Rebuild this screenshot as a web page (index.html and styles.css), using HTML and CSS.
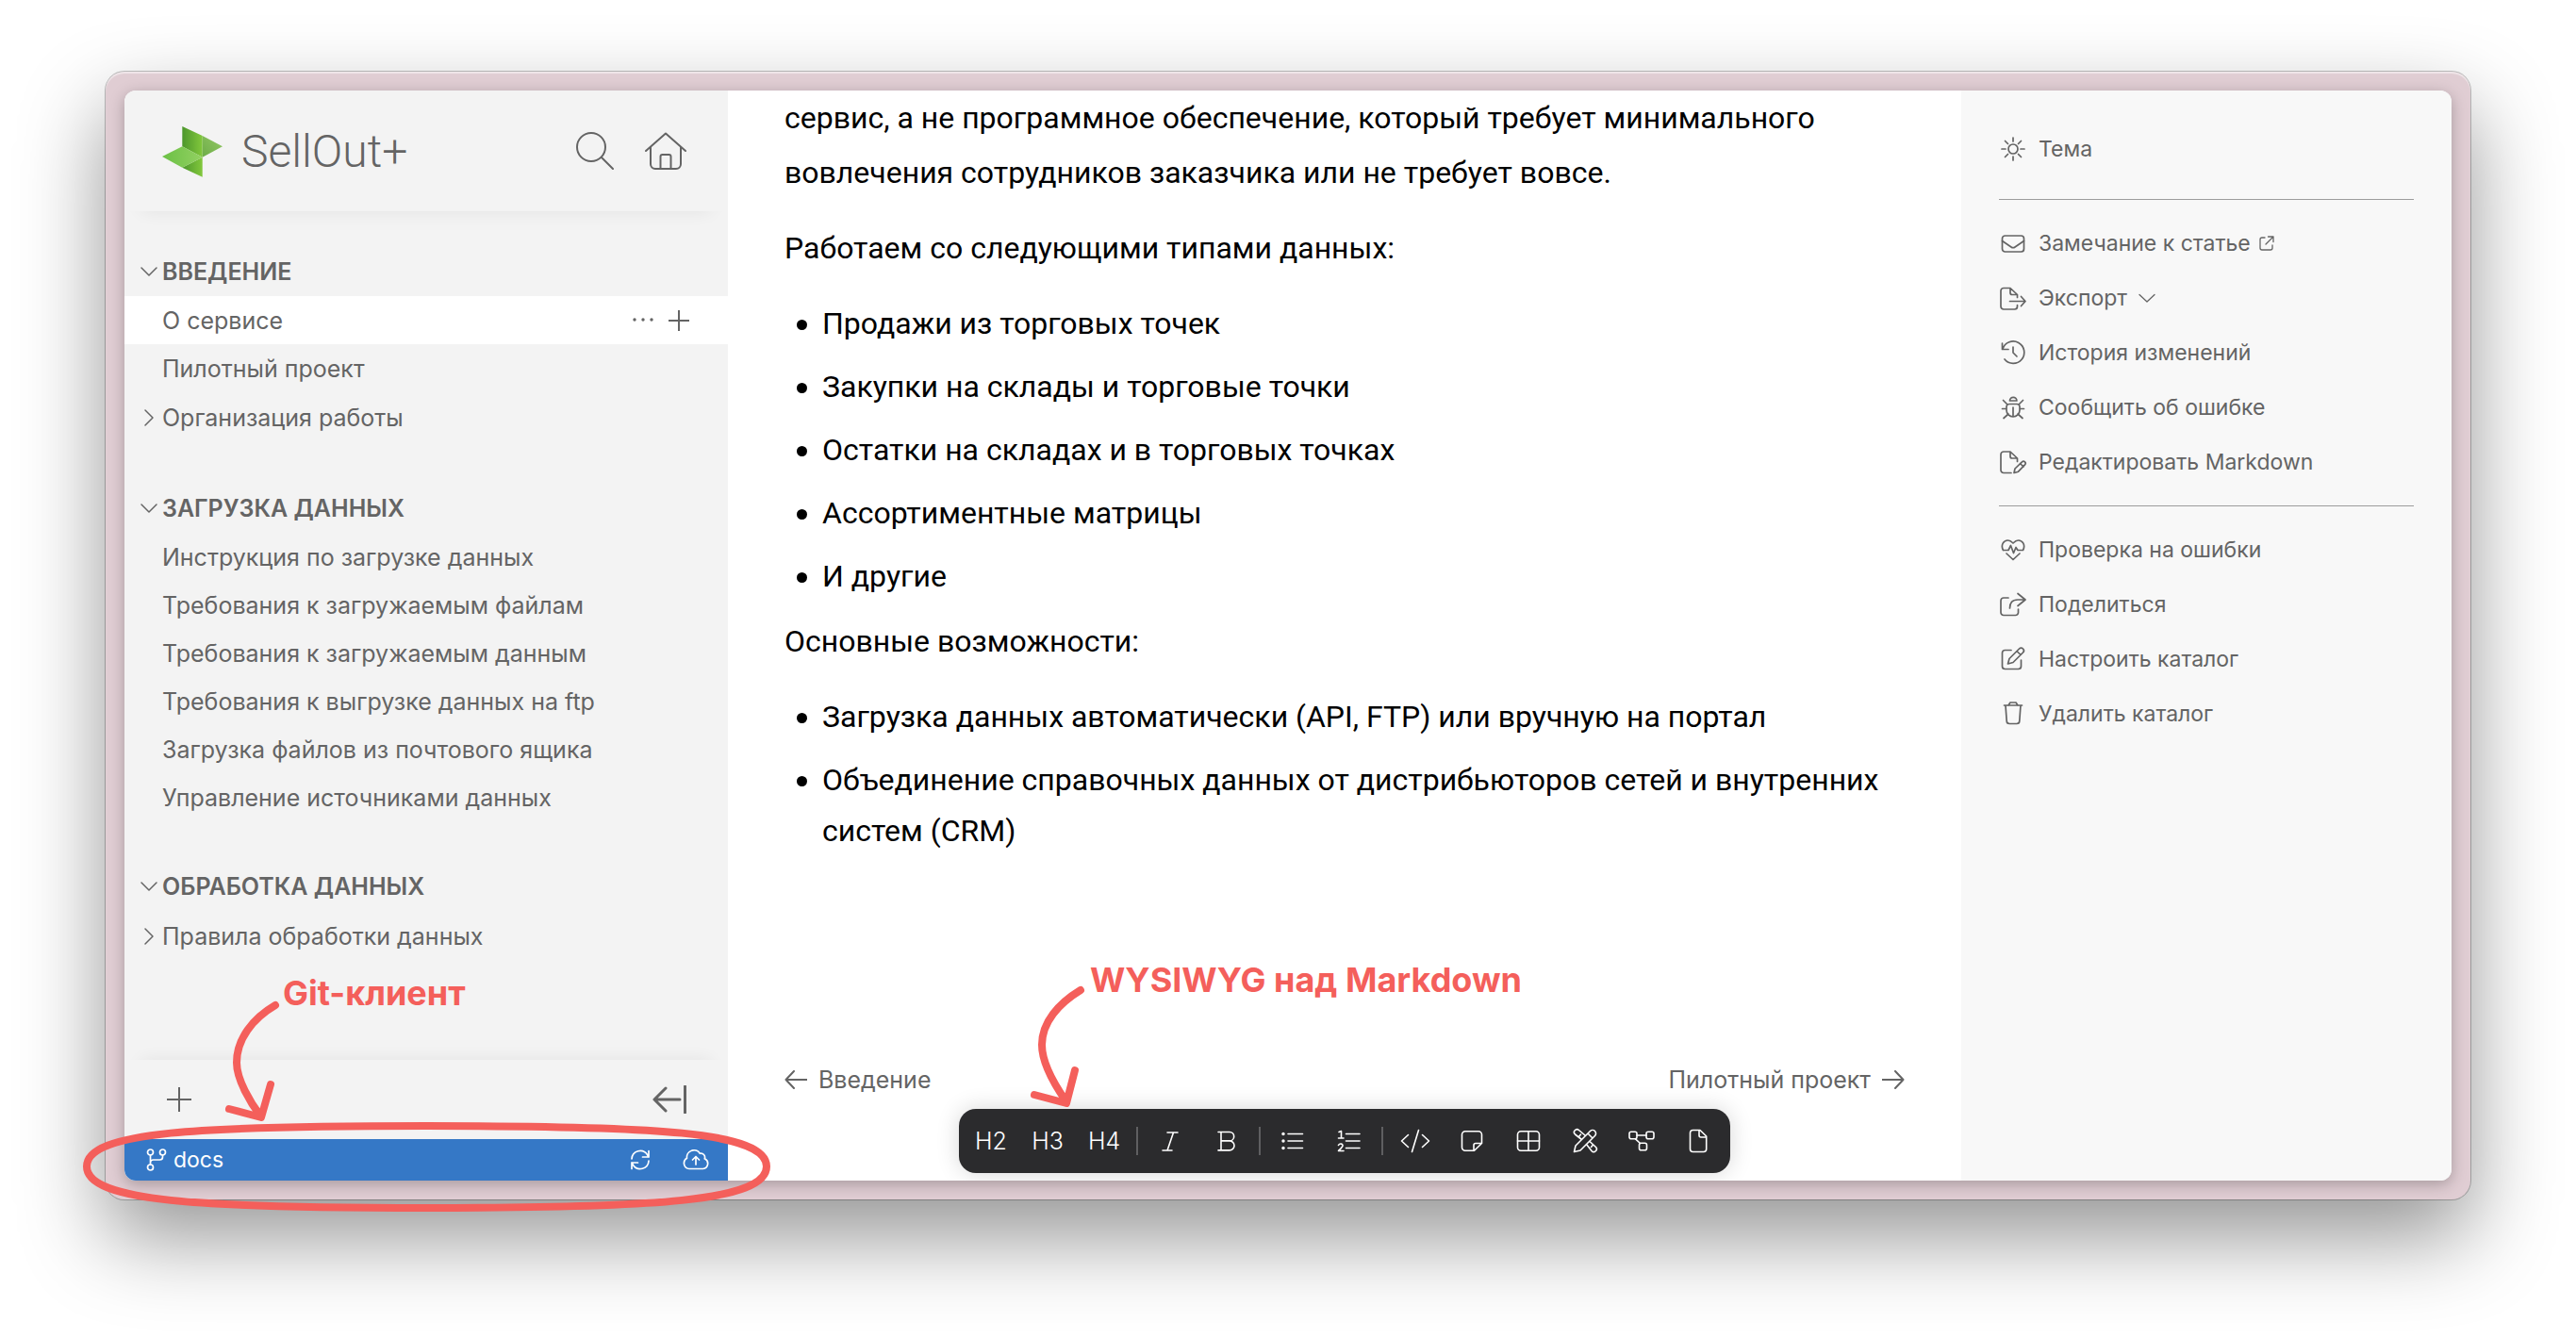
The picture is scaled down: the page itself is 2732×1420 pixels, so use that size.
FILE: index.html
```html
<!DOCTYPE html>
<html lang="ru">
<head>
<meta charset="utf-8">
<meta name="viewport" content="width=device-width, initial-scale=1">
<title>SellOut+ — О сервисе</title>
<link rel="stylesheet" href="styles.css">
</head>
<body>
<div class="frame">
  <div class="app">

    <aside class="sidebar">
      <header class="sidebar-header">
        <a class="brand" href="#">
          <svg class="brand-logo" viewBox="0 0 64 56" aria-hidden="true">
            <defs>
              <linearGradient id="g1" x1="0" y1="0" x2="1" y2="0"><stop offset="0" stop-color="#4c962c"/><stop offset="1" stop-color="#82c83c"/></linearGradient>
              <linearGradient id="g2" x1="0" y1="1" x2="1" y2="0"><stop offset="0" stop-color="#6dac48"/><stop offset="1" stop-color="#93c864"/></linearGradient>
              <linearGradient id="g3" x1="0" y1="0" x2="1" y2="0"><stop offset="0" stop-color="#6bc045"/><stop offset="1" stop-color="#93d162"/></linearGradient>
            </defs>
            <path d="M21.3 1 42.7 11V33.7L21.3 22.3z" fill="url(#g1)"/>
            <path d="M42.7 11 64 22.3 42.7 33.7z" fill="url(#g2)"/>
            <path d="M42.7 33.7V54.7L21.3 44.7z" fill="url(#g1)"/>
            <path d="M0 33 21.3 22.3 42.7 33.7 21.3 44.7z" fill="url(#g3)"/>
          </svg>
          <span>SellOut+</span>
        </a>
        <div class="header-actions">
          <button class="icon-btn" aria-label="Поиск">
            <svg width="40" height="40" viewBox="0 0 40 40"><circle cx="16" cy="16" r="15"/><path d="M27 27 39 39"/></svg>
          </button>
          <button class="icon-btn" aria-label="На главную">
            <svg width="44" height="40" viewBox="0 0 44 40"><path d="M1 20 22 1.5 43 20M6 16V34a5 5 0 0 0 5 5H33a5 5 0 0 0 5-5V16M16.500 39V26a2 2 0 0 1 2-2h7a2 2 0 0 1 2 2V39"/></svg>
          </button>
        </div>
      </header>

      <nav class="nav">
        <section class="nav-group">
          <h2 class="nav-row nav-heading"><svg class="chev" viewBox="0 0 20 20"><path d="M2 6 10 14 18 6"/></svg><a href="#">ВВЕДЕНИЕ</a></h2>
          <div class="nav-row is-active">
            <a href="#">О сервисе</a>
            <div class="row-actions">
              <button class="icon-btn" aria-label="Ещё"><svg class="solid" width="22" height="22" viewBox="0 0 22 22"><circle cx="2" cy="10" r="1.700"/><circle cx="11" cy="10" r="1.700"/><circle cx="20" cy="10" r="1.700"/></svg></button>
              <button class="icon-btn" aria-label="Добавить"><svg width="22" height="22" viewBox="0 0 22 22"><path d="M11 0V22M0 11H22"/></svg></button>
            </div>
          </div>
          <div class="nav-row"><a href="#">Пилотный проект</a></div>
          <div class="nav-row nav-parent"><svg class="chev" viewBox="0 0 20 20"><path d="M6 2 14 10 6 18"/></svg><a href="#">Организация работы</a></div>
        </section>
        <section class="nav-group">
          <h2 class="nav-row nav-heading"><svg class="chev" viewBox="0 0 20 20"><path d="M2 6 10 14 18 6"/></svg><a href="#">ЗАГРУЗКА ДАННЫХ</a></h2>
          <div class="nav-row"><a href="#">Инструкция по загрузке данных</a></div>
          <div class="nav-row"><a href="#">Требования к загружаемым файлам</a></div>
          <div class="nav-row"><a href="#">Требования к загружаемым данным</a></div>
          <div class="nav-row"><a href="#">Требования к выгрузке данных на ftp</a></div>
          <div class="nav-row"><a href="#">Загрузка файлов из почтового ящика</a></div>
          <div class="nav-row"><a href="#">Управление источниками данных</a></div>
        </section>
        <section class="nav-group">
          <h2 class="nav-row nav-heading"><svg class="chev" viewBox="0 0 20 20"><path d="M2 6 10 14 18 6"/></svg><a href="#">ОБРАБОТКА ДАННЫХ</a></h2>
          <div class="nav-row nav-parent"><svg class="chev" viewBox="0 0 20 20"><path d="M6 2 14 10 6 18"/></svg><a href="#">Правила обработки данных</a></div>
        </section>
      </nav>

      <footer class="sidebar-footer">
        <button class="icon-btn" aria-label="Новая статья"><svg width="26" height="26" viewBox="0 0 26 26"><path d="M13 0V26M0 13H26"/></svg></button>
        <button class="icon-btn" aria-label="Свернуть панель"><svg class="bold" width="36" height="30" viewBox="0 0 36 30"><path d="M29 15H2M14 3 2 15 14 27M34.500 1V29"/></svg></button>
      </footer>
      <div class="git-bar">
        <button class="git-branch">
          <svg width="22" height="24" viewBox="0 0 22 24"><circle cx="4.500" cy="4" r="3"/><circle cx="17.500" cy="4" r="3"/><circle cx="4.500" cy="20" r="3"/><path d="M4.500 7V17M17.500 7v2a3 3 0 0 1-3 3h-7a3 3 0 0 0-3 3"/></svg>
          <span>docs</span>
        </button>
        <button class="icon-btn" aria-label="Синхронизировать"><svg width="22" height="22" viewBox="0 0 22 22"><path d="M2 10a9 9 0 0 1 16.500-4.500L20 8M20 1.500V8H13.500M20 12a9 9 0 0 1-16.500 4.500L2 14M2 20.500V14H8.500"/></svg></button>
        <button class="icon-btn" aria-label="Опубликовать"><svg width="28" height="22" viewBox="0 0 28 22"><path d="M7 20.500a6 6 0 0 1-2.500-11.200 7.500 7.500 0 0 1 13.800-5 4.200 4.200 0 0 1 5 5.500A5.600 5.600 0 0 1 21.500 20.500zM14 16V8M10.500 11 14 7.500 17.500 11"/></svg></button>
      </div>
    </aside>

    <main class="main">
      <article class="article">
        <p>сервис, а не программное обеспечение, который требует минимального вовлечения сотрудников заказчика или не требует вовсе.</p>
        <p>Работаем со следующими типами данных:</p>
        <ul>
          <li><span>Продажи из торговых точек</span></li>
          <li><span>Закупки на склады и торговые точки</span></li>
          <li><span>Остатки на складах и в торговых точках</span></li>
          <li><span>Ассортиментные матрицы</span></li>
          <li><span>И другие</span></li>
        </ul>
        <p>Основные возможности:</p>
        <ul>
          <li><span>Загрузка данных автоматически (API, FTP) или вручную на портал</span></li>
          <li><span>Объединение справочных данных от дистрибьюторов сетей и внутренних систем (CRM)</span></li>
        </ul>
      </article>

      <nav class="pager">
        <a href="#"><svg width="24" height="20" viewBox="0 0 24 20"><path d="M24 10H1.500M10 1 1.500 10 10 19"/></svg>Введение</a>
        <a href="#">Пилотный проект<svg width="24" height="20" viewBox="0 0 24 20"><path d="M0 10H22.500M14 1 22.500 10 14 19"/></svg></a>
      </nav>

      <div class="toolbar" role="toolbar" aria-label="Форматирование">
        <button>H2</button>
        <button>H3</button>
        <button>H4</button>
        <span class="sep"></span>
        <button aria-label="Курсив"><svg viewBox="0 0 28 28"><path d="M11 5H22M6 24H16M17.500 5 11 24"/></svg></button>
        <button aria-label="Полужирный"><svg viewBox="0 0 28 28"><path d="M5 4.500H17a4.700 4.700 0 0 1 0 9.400H8M17 13.900a5 5 0 0 1 0 10H5M8 4.500V24"/></svg></button>
        <span class="sep"></span>
        <button aria-label="Список"><svg viewBox="0 0 28 28"><path d="M9 6.500H24.500M9 14H24.500M9 21.500H24.500"/><g class="dots"><circle cx="4" cy="6.500" r="1.700"/><circle cx="4" cy="14" r="1.700"/><circle cx="4" cy="21.500" r="1.700"/></g></svg></button>
        <button aria-label="Нумерованный список"><svg viewBox="0 0 28 28"><path d="M10.500 6.500H25M10.500 14H25M10.500 21.500H25M3 4.500 5.500 3.500V11M2.500 11H8M2.500 18.500C3.500 16.500 7.500 16.500 7 19.200 6.800 20.500 4.500 22.500 2.500 24.500H8"/></svg></button>
        <span class="sep"></span>
        <button aria-label="Код"><svg class="wide" viewBox="0 0 32 28"><path d="M8.500 7.500 1.500 14 8.500 20.500M23.500 7.500 30.500 14 23.500 20.500M19.500 2.500 12.500 25.500"/></svg></button>
        <button aria-label="Заметка"><svg viewBox="0 0 28 28"><path d="M7 3.700H21a3.500 3.500 0 0 1 3.500 3.500V16.500L16.500 24.300H7a3.500 3.500 0 0 1-3.500-3.500V7.200A3.500 3.500 0 0 1 7 3.700zM16 24V18.500a2 2 0 0 1 2-2H24.500"/></svg></button>
        <button aria-label="Таблица"><svg viewBox="0 0 28 28"><rect x="2.500" y="3.700" width="23" height="20.600" rx="3.500"/><path d="M14 3.700V24.300M2.500 14H25.500"/></svg></button>
        <button aria-label="Рисунок"><svg viewBox="0 0 28 28"><path d="M2.500 25.500 4 19 19.500 3.500a3.300 3.300 0 0 1 5 5L9 24zM17 6 22 11M10.500 12.500 3.500 7a3 3 0 0 1 4-4.500L14 8M7.500 9.500 9.500 7M15.500 17.500 21 24.500a3 3 0 0 0 4.500-4L19 14.500M20.500 20.500 22.500 18"/></svg></button>
        <button aria-label="Диаграмма"><svg viewBox="0 0 28 28"><rect x="1" y="4.200" width="8" height="7.600" rx="2"/><rect x="19" y="4.200" width="8" height="7.600" rx="2"/><rect x="11.500" y="16.200" width="8" height="7.600" rx="2"/><path d="M9 8H19M7.500 11.800 12.500 16.500"/></svg></button>
        <button aria-label="Файл"><svg viewBox="0 0 28 28"><path d="M8.500 2.500H16L22.700 9V22.500a3 3 0 0 1-3 3H8.500a3 3 0 0 1-3-3V5.500a3 3 0 0 1 3-3zM15 2.500V8a2 2 0 0 0 2 2H22.500"/></svg></button>
      </div>

      <p class="note note-editor">WYSIWYG над Markdown</p>
      <svg class="note-arrow note-arrow-editor" width="70" height="140" viewBox="0 0 70 140" aria-hidden="true"><path d="M56 10C33 24 15 44 15 68 15 88 31 114 40 127M50 95 41 130 7 121"/></svg>
    </main>

    <aside class="panel">
      <ul class="panel-list">
        <li><button><svg viewBox="0 0 30 30"><circle cx="15" cy="15" r="5"/><path d="M15 3V7M15 23V27M3 15H7M23 15H27M6.500 6.500 9.500 9.500M20.500 20.500 23.500 23.500M6.500 23.500 9.500 20.500M20.500 9.500 23.500 6.500"/></svg>Тема</button></li>
      </ul>
      <ul class="panel-list">
        <li><a href="#"><svg viewBox="0 0 30 30"><rect x="3.500" y="7" width="23" height="17" rx="3"/><path d="M3.500 12.500 13 19a3.500 3.500 0 0 0 4 0L26.500 12.500"/></svg>Замечание к статье<svg class="ext" viewBox="0 0 16 16"><path d="M6 2H3A2 2 0 0 0 1 4V13A2 2 0 0 0 3 15H12A2 2 0 0 0 14 13V10M9.500 1H15V6.500M15 1 7 9"/></svg></a></li>
        <li><button><svg viewBox="0 0 30 30"><path d="M19.500 22.500V24a3 3 0 0 1-3 3H5a3 3 0 0 1-3-3V7.500a3 3 0 0 1 3-3H12L19.500 11.500V14.500M12 4.500V9.500a2 2 0 0 0 2 2H19.500M11.500 18.500H28M23.500 13.500 28 18.500 23.500 23.500"/></svg>Экспорт<svg class="more" viewBox="0 0 18 18"><path d="M1 5.500 9 13 17 5.500"/></svg></button></li>
        <li><button><svg viewBox="0 0 30 30"><path d="M4 11A11.700 11.700 0 1 1 6 22M3.500 5V11.500H10M15 9V15L19 19"/></svg>История изменений</button></li>
        <li><a href="#"><svg viewBox="0 0 30 30"><path d="M11.500 8a3.700 3.700 0 0 1 7.400 0zM11 11.500H19a3 3 0 0 1 3 3V18a7 7 0 0 1-14 0V14.500a3 3 0 0 1 3-3zM15 15V25M3.500 16.500H8M22 16.500H26.500M4.500 7.500 9 12M25.500 7.500 21 12M5 26.500 10 22M25 26.500 20 22"/></svg>Сообщить об ошибке</a></li>
        <li><button><svg viewBox="0 0 30 30"><path d="M13 26.500H5a3 3 0 0 1-3-3V7a3 3 0 0 1 3-3H12L19.500 11V14.500M12 4V9a2 2 0 0 0 2 2H19.500M16 26.500 17 22 24.500 14.800a2 2 0 0 1 3 3L20.500 25.200zM22.500 16.500 26 20"/></svg>Редактировать Markdown</button></li>
      </ul>
      <ul class="panel-list">
        <li><button><svg viewBox="0 0 30 30"><path d="M4.500 15.500C1.500 10 5 5 9.500 5 12 5 13.500 6.500 15 8 16.500 6.500 18 5 20.500 5 25 5 28.500 10 25.500 15.500H20L18 12.500 15.500 18.500 12.500 10.500 10 15.500H4.500M8 19 15 25.500 22 19"/></svg>Проверка на ошибки</button></li>
        <li><button><svg viewBox="0 0 30 30"><path d="M10 8H5a3 3 0 0 0-3 3V23.500a3 3 0 0 0 3 3H17.500a3 3 0 0 0 3-3V20M20 3.500 28 10 20 16.500M28 10H20C14 10 11.500 13 11.500 19"/></svg>Поделиться</button></li>
        <li><button><svg viewBox="0 0 30 30"><path d="M13 5.500H6.500a3 3 0 0 0-3 3V22.500a3 3 0 0 0 3 3H20.500a3 3 0 0 0 3-3V16M9.500 20 11 14.500 21.500 4a2.800 2.800 0 0 1 4 4L15 18.500zM19 6.500 23 10.500"/></svg>Настроить каталог</button></li>
        <li><button><svg viewBox="0 0 30 30"><path d="M5.500 6H24.500M10 6 12 3H18L20 6M7 6 8.200 22.500A3 3 0 0 0 11.200 25.500H18.800A3 3 0 0 0 21.800 22.500L23 6"/></svg>Удалить каталог</button></li>
      </ul>
    </aside>
  </div>

  <p class="note note-git">Git-клиент</p>
  <svg class="note-arrow note-arrow-git" width="750" height="260" viewBox="0 0 750 260" aria-hidden="true"><path d="M212 26C188 40 171 62 171 87 171 105 186 130 196 143M207 110 197 145 163 136M372 154C130 154 12 160 12 197S130 241 372 241 733 234 733 197 614 154 372 154z"/></svg>
</div>
</body>
</html>
```
FILE: styles.css
```css
:root {
  --ui: Inter, "Liberation Sans", sans-serif;
  --text: Roboto, "Liberation Sans", sans-serif;
  --gray: #646464;
  --red: #f45f5b;
}

* { box-sizing: border-box; }

body {
  margin: 0;
  min-height: 100vh;
  display: flex;
  padding: 76px 112px 148px;
  background: #fff;
  color: var(--gray);
  font-family: var(--ui);
  font-size: 25px;
}

a { color: inherit; text-decoration: none; }

button {
  padding: 0;
  border: 0;
  background: none;
  color: inherit;
  font: inherit;
  cursor: pointer;
}

svg {
  display: block;
  flex: none;
  fill: none;
  stroke: currentColor;
  stroke-width: 2;
  stroke-linecap: round;
  stroke-linejoin: round;
}

.frame {
  position: relative;
  flex: 1;
  display: flex;
  padding: 20px;
  border-radius: 20px;
  background: #e0cdd3;
  box-shadow:
    inset 0 2px 1px rgba(255, 255, 255, .5),
    0 0 0 1px rgba(0, 0, 0, .24),
    0 40px 90px rgba(0, 0, 0, .42);
}

.app {
  flex: 1;
  display: grid;
  grid-template-columns: 640px 1fr 520px;
  border-radius: 12px;
  overflow: hidden;
  background: #fff;
  box-shadow: 0 4px 16px rgba(0, 0, 0, .26);
}

/* Sidebar */
.sidebar {
  display: flex;
  flex-direction: column;
  background: #f3f3f3;
}

.sidebar-header {
  display: flex;
  align-items: center;
  justify-content: space-between;
  height: 128px;
  padding: 2px 44px 0 40px;
  box-shadow: 0 18px 18px -18px rgba(0, 0, 0, .07);
}

.brand {
  display: flex;
  align-items: center;
  gap: 20px;
  font: 300 48px/56px var(--text);
}

.brand-logo { width: 64px; height: 56px; stroke: none; }
.header-actions { display: flex; gap: 33px; padding-bottom: 2px; }

.nav {
  display: flex;
  flex-direction: column;
  gap: 43px;
  padding-top: 38px;
}

.nav-row {
  display: flex;
  align-items: center;
  height: 51px;
  margin: 0;
  padding: 0 41px 0 40px;
}

.nav-heading,
.nav-parent { gap: 4px; padding-left: 16px; }
.nav-heading { height: 52px; font-size: 25px; font-weight: 600; }
.nav-parent { height: 54px; }
.is-active { background: #fff; justify-content: space-between; }
.row-actions { display: flex; gap: 16px; }
.chev { width: 20px; height: 20px; stroke-width: 1.5; }
.solid { fill: currentColor; stroke: none; }
.bold { stroke-width: 3; }

.sidebar-footer {
  display: flex;
  align-items: center;
  justify-content: space-between;
  height: 84px;
  margin-top: auto;
  padding: 0 44px 0 45px;
  box-shadow: 0 -18px 18px -18px rgba(0, 0, 0, .07);
}

.git-bar {
  display: flex;
  align-items: center;
  gap: 34px;
  height: 44px;
  padding: 0 20px 0 23px;
  background: #3578c6;
  color: #fff;
}

.git-bar svg { stroke-width: 1.7; }

.git-branch {
  display: flex;
  align-items: center;
  gap: 7px;
  margin-right: auto;
  font-size: 23px;
}

/* Article */
.main {
  position: relative;
  display: flex;
  flex-direction: column;
  padding: 0 60px;
}

.article { color: #000; font: 32px/58px var(--text); }
.article p { margin: 0 0 22px; }
.article ul { margin: 0; padding: 2px 0 0 13px; list-style: none; line-height: 54px; }

.article li {
  display: grid;
  grid-template-columns: 11px 1fr;
  gap: 16px;
  padding-bottom: 13px;
}

.article li::before {
  content: "";
  width: 11px;
  height: 11px;
  margin-top: 23px;
  border-radius: 50%;
  background: #000;
}

.pager {
  display: flex;
  justify-content: space-between;
  margin-top: auto;
  padding-bottom: 91px;
  line-height: 32px;
}

.pager a { display: flex; align-items: center; gap: 12px; }

.toolbar {
  position: absolute;
  bottom: 8px;
  left: 50%;
  transform: translateX(-50%);
  display: flex;
  align-items: center;
  height: 68px;
  padding: 0 4px;
  border-radius: 18px;
  background: #2b2b2d;
  color: #fff;
  box-shadow: 0 0 24px rgba(0, 0, 0, .16);
}

.toolbar button {
  display: flex;
  align-items: center;
  justify-content: center;
  width: 60px;
  height: 60px;
  font: 300 25px/30px var(--ui);
}

.toolbar svg { width: 28px; height: 28px; stroke-width: 1.6; }
.toolbar .wide { width: 32px; }
.toolbar .dots { fill: currentColor; stroke: none; }
.sep { width: 2px; height: 30px; margin: 0 4px; background: #5f5f61; }

/* Article actions */
.panel { padding: 33px 40px; background: #f8f8f8; }
.panel-list { margin: 0; padding: 0; list-style: none; }

.panel-list + .panel-list {
  margin-top: 17px;
  padding-top: 17px;
  border-top: 1px solid #9c9c9c;
}

.panel-list:first-child { padding-bottom: 7px; }

.panel-list a,
.panel-list button {
  display: flex;
  align-items: center;
  height: 58px;
  gap: 12px;
  font-size: 23px;
}

.panel-list svg { width: 30px; height: 30px; stroke-width: 1.7; }
.panel-list .ext { width: 16px; height: 16px; stroke-width: 1.3; margin-left: -3px; }
.panel-list .more { width: 18px; height: 18px; stroke-width: 1.3; }

/* Callouts over the window */
.note {
  position: absolute;
  margin: 0;
  color: var(--red);
  font-size: 36px;
  font-weight: 700;
  line-height: 40px;
  white-space: nowrap;
}

.note-arrow { position: absolute; color: var(--red); stroke-width: 8; pointer-events: none; }
.note-git { left: 188px; bottom: 199px; }
.note-arrow-git { left: -32px; bottom: -28px; }
.note-editor { left: calc(50% - 270px); bottom: 193px; }
.note-arrow-editor { left: calc(50% - 336px); bottom: 72px; }
```
